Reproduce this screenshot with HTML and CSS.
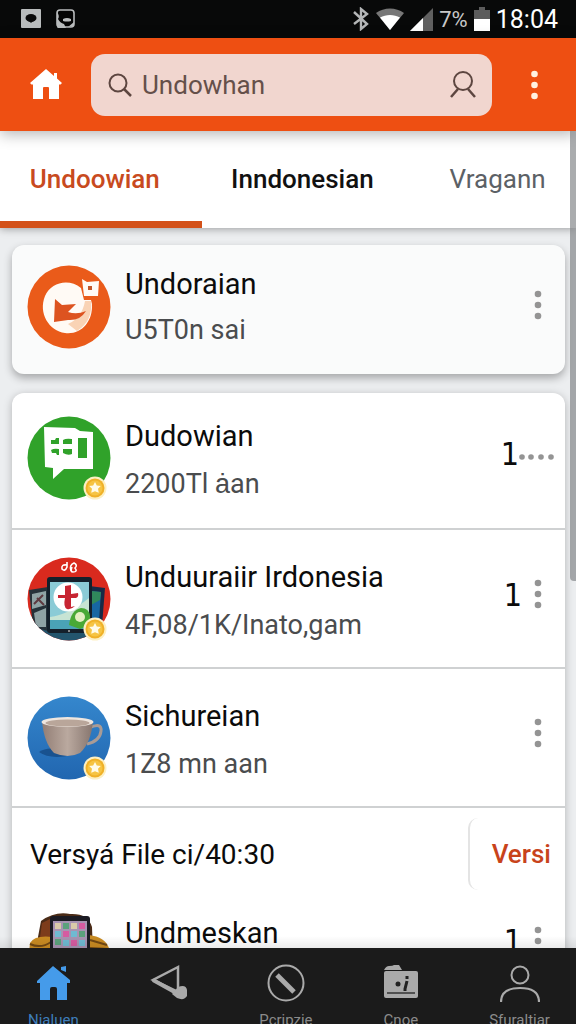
FILE: index.html
```html
<!DOCTYPE html>
<html lang="id">
<head>
  <meta charset="UTF-8">
  <meta name="viewport" content="width=device-width, initial-scale=1.0">
  <title>Undowhan</title>
  <link rel="stylesheet" href="styles.css">
</head>
<body>

  <svg class="defs" width="0" height="0" aria-hidden="true">
    <symbol id="dots" viewBox="0 0 8 30">
      <circle cx="4" cy="4" r="3.3"/><circle cx="4" cy="15" r="3.3"/><circle cx="4" cy="26" r="3.3"/>
    </symbol>
    <symbol id="coin" viewBox="0 0 24 24">
      <circle cx="12" cy="12" r="11.5" fill="#fdf0c4"/>
      <circle cx="12" cy="12" r="9.5" fill="#f0b128"/>
      <circle cx="12" cy="12" r="7.5" fill="#f6c443"/>
      <path d="M12 6l1.8 3.4 4 .6-2.8 2.8.8 4L12 15.200l-3.800 1.600.8-4L6.200 10l4-.6z" fill="#fffbe8"/>
    </symbol>
  </svg>

  <div class="statusbar">
    <div class="status-left">
      <svg width="20" height="20" viewBox="0 0 20 20"><rect width="20" height="19" rx="1" fill="#b9bcbd"/><ellipse cx="10" cy="9" rx="5.500" ry="4" fill="#0a0a0a"/><path d="M8 12h4l-2 2z" fill="#0a0a0a"/></svg>
      <svg width="20" height="20" viewBox="0 0 20 20"><rect x="1" y="1" width="17" height="17" rx="3" fill="#050505" stroke="#b9bcbd" stroke-width="1.600"/><path d="M1 3q3 4 1 7 2 4 6 5l2 4H2q-1 0-1-2z" fill="#b9bcbd"/><path d="M7 10q4-2 8 0v2q-4 1-8 0zM12 18l6-5v4z" fill="#b9bcbd"/></svg>
    </div>
    <div class="status-right">
      <svg width="18" height="24" viewBox="0 0 18 24"><path d="M2 5l13 12-6 5V2l6 5L2 17" fill="none" stroke="#b4b6b7" stroke-width="2.400"/></svg>
      <svg width="28" height="22" viewBox="0 0 28 22"><path d="M0 5C8-1 20-1 28 5L14 22z" fill="#777"/><path d="M4 9.500C10 6 18 6 24 9.500L14 22z" fill="#fff"/></svg>
      <svg width="23" height="23" viewBox="0 0 23 23"><path d="M23 0v23H0z" fill="#606060"/><path d="M13 10v13H0z" fill="#fff"/></svg>
      <span class="battery-text">7%</span>
      <svg width="16" height="24" viewBox="0 0 16 24"><path d="M5 0h6v3h5v21H0V3h5z" fill="#5c5c5c"/><path d="M0 12h16v12H0z" fill="#fff"/></svg>
      <span class="clock">18:04</span>
    </div>
  </div>

  <header class="appbar">
    <a href="#" class="home-link" aria-label="Home">
      <svg width="32" height="31" viewBox="0 0 32 31"><path d="M16 0L0 14l1.500 1.500H3V30h10V19q0-1 1-1h4q1 0 1 1v11h10V15.500h1.500L32 14l-5-4.500V4h-3v3z" fill="#fff"/></svg>
    </a>
    <div class="search">
      <svg width="24" height="24" viewBox="0 0 24 24"><circle cx="10" cy="10" r="8.500" fill="none" stroke="#5d4640" stroke-width="2"/><path d="M16 16l7 7" stroke="#5d4640" stroke-width="2.500"/></svg>
      <input type="text" value="Undowhan" aria-label="Search">
      <svg width="26" height="28" viewBox="0 0 26 28"><circle cx="13" cy="10" r="9" fill="none" stroke="#5d4640" stroke-width="2"/><path d="M8 18L1 26M18 18l7 8" fill="none" stroke="#5d4640" stroke-width="2.500"/></svg>
    </div>
    <button class="menu-btn" aria-label="Menu"><svg width="9" height="30"><use href="#dots"/></svg></button>
  </header>

  <nav class="tabs">
    <a href="#" class="tab active">Undoowian</a>
    <a href="#" class="tab">Inndonesian</a>
    <a href="#" class="tab muted">Vragann</a>
  </nav>

  <main class="content">
    <section class="card featured">
      <div class="row">
        <div class="avatar">
          <svg viewBox="0 0 84 84">
            <circle cx="42" cy="42" r="41.500" fill="#ea5b1a"/>
            <path d="M54 23C42 13 24 17 18 31c-7 17 4 35 20 37 16 2 28-11 27-29l-1-4h-7z" fill="#fffaf5"/>
            <path d="M58 36h6q2 20-14 30l-9-7q14-6 17-23z" fill="#f9d3b5"/>
            <path d="M27 57l1-23 7 6 14-1-8 8q9 3 18-1-6 10-18 9z" fill="#dd5320"/>
            <path d="M55 14l5 3 12-1-1 15H57z" fill="#fffaf5"/>
            <rect x="61" y="21" width="4" height="4" fill="#c4572a"/>
          </svg>
        </div>
        <div class="info">
          <h2>Undoraian</h2>
          <p>U5T0n sai</p>
        </div>
        <button class="more" aria-label="More"><svg width="8" height="30"><use href="#dots"/></svg></button>
      </div>
    </section>

    <section class="card">
      <div class="row first">
        <div class="avatar">
          <svg viewBox="0 0 84 84">
            <circle cx="42" cy="42" r="41.500" fill="#30a22a"/>
            <path d="M17 11l31 1 5 3 13 1v37H37L26 63v-11l-8-1z" fill="#fff"/>
            <g fill="#30a22a"><path d="M24 24h4l1-2h3v6h-8zM36 24q3-2 9-1v5h-9zM24 34q3-2 8-1v6h-2l-1-2h-4zM36 33h9v5q-4 2-9-1zM51 22h9v20h-9z"/></g>
          </svg>
          <svg class="badge"><use href="#coin"/></svg>
        </div>
        <div class="info">
          <h2>Dudowian</h2>
          <p>2200Tl ȧan</p>
        </div>
        <span class="count">1</span>
        <button class="more wide" aria-label="More">
          <svg width="35" height="8" viewBox="0 0 35 8"><circle cx="3" cy="4" r="2.800"/><circle cx="12" cy="4" r="2.800"/><circle cx="22" cy="4" r="2.800"/><circle cx="32" cy="4" r="2.800"/></svg>
        </button>
      </div>

      <div class="row">
        <div class="avatar">
          <svg viewBox="0 0 84 84">
            <clipPath id="round"><circle cx="42" cy="42" r="41.500"/></clipPath>
            <g clip-path="url(#round)">
              <rect width="84" height="84" fill="#d92a1e"/>
              <path d="M0 65h84v19H0z" fill="#23556d"/>
              <path d="M2 33l19-3v44L6 70z" fill="#26323a"/>
              <path d="M5 37l14-3v14L5 52zM7 56l12-5v19H9z" fill="#8fa3a5"/>
              <path d="M10 41l7 7M7 47l9-9" stroke="#5d3940" stroke-width="2"/>
              <path d="M62 29l16 2-3 38-13 4z" fill="#172a46"/>
              <path d="M64 34l10 1-2 29-8 3z" fill="#1766a2"/>
              <path d="M64 34l10 1-1 8-9 5z" fill="#30875b"/>
              <rect x="20" y="20" width="45" height="56" rx="3" fill="#14202b"/>
              <path d="M23 25h39v47H23z" fill="#8bcbd6"/>
              <path d="M23 60q18-2 39-19v31H23z" fill="#c7e4d4"/>
              <path d="M23 63h39v9H23z" fill="#4aa3b6"/>
              <circle cx="41" cy="40" r="14.500" fill="#fff"/>
              <path d="M38 29l6-1v9l7-1q1 4-2 5h-5v9l4-1q-4 4-8 3-4-2-2-11h-7v-3h7z" fill="#c72532"/>
              <path d="M42 68q2-15 12-17 8 0 9 8v9l-10 4z" fill="#49a936"/>
              <circle cx="53" cy="60" r="5" fill="#e4efc2"/>
              <circle cx="42" cy="74" r="1" fill="#aaa"/>
              <path d="M40 8q-6-1-5 4 3 3 5-2V5m4 9q-2-6 3-8 4 2 1 5 3 4-2 4-3 0-1-5" fill="none" stroke="#fff" stroke-width="1.600"/>
            </g>
          </svg>
          <svg class="badge"><use href="#coin"/></svg>
        </div>
        <div class="info">
          <h2>Unduuraiir Irdonesia</h2>
          <p>4F,08/1K/Inato,gam</p>
        </div>
        <span class="count">1</span>
        <button class="more" aria-label="More"><svg width="8" height="30"><use href="#dots"/></svg></button>
      </div>

      <div class="row">
        <div class="avatar">
          <svg viewBox="0 0 84 84">
            <linearGradient id="sky" x2="0" y2="1"><stop stop-color="#3587cd"/><stop offset="1" stop-color="#2166b0"/></linearGradient>
            <linearGradient id="cup"><stop stop-color="#927e75"/><stop offset=".5" stop-color="#baa99f"/><stop offset="1" stop-color="#86756e"/></linearGradient>
            <circle cx="42" cy="42" r="41.500" fill="url(#sky)"/>
            <path d="M12 56q8-6 23-2l10 5q-22 5-33-3z" fill="#19528f"/>
            <path d="M62 32q13-6 12 3-1 10-14 13" fill="none" stroke="#a99b95" stroke-width="3"/>
            <path d="M15 25q2 22 12 32 14 6 26 0 11-10 13-32z" fill="url(#cup)"/>
            <ellipse cx="40.500" cy="26" rx="26" ry="5" fill="#eee6df"/>
            <ellipse cx="40.500" cy="27" rx="22" ry="3.500" fill="#b9a69a"/>
          </svg>
          <svg class="badge"><use href="#coin"/></svg>
        </div>
        <div class="info">
          <h2>Sichureian</h2>
          <p>1Z8 mn aan</p>
        </div>
        <button class="more" aria-label="More"><svg width="8" height="30"><use href="#dots"/></svg></button>
      </div>

      <div class="version">
        <span>Versyá File ci/40:30</span>
        <button class="version-btn">Versi</button>
      </div>

      <div class="row last">
        <div class="avatar">
          <svg viewBox="0 0 84 84">
            <path d="M11 24L14 8Q28-2 43 1q18-1 22 13l1 27H12z" fill="#4a2b17"/>
            <path d="M13 24L15 10l12-6v22z" fill="#7d3c1b"/>
            <path d="M1 50l2-20q5-8 22-6v40zM62 22q16 2 20 13v29H60z" fill="#c98b22"/>
            <path d="M3 31q11 5 21-2M3 37q12 4 21 0M63 27l17 5M63 35l18 1" stroke="#714813" stroke-width="2" fill="none"/>
            <rect x="23" y="3" width="40" height="66" rx="3" fill="#1b1b23"/>
            <rect x="26" y="8" width="34" height="56" fill="#a793b2"/>
            <g fill="#d9caa9"><path d="M28 10h6v6h-6zM44 10h6v6h-6z"/></g>
            <g fill="#5ba17c"><path d="M36 10h6v6h-6zM52 18h6v6h-6zM28 26h6v6h-6z"/></g>
            <g fill="#d65ba1"><path d="M52 10h6v6h-6zM36 18h6v6h-6zM44 27h6v6h-6z"/></g>
            <g fill="#6fbad2"><path d="M28 18h6v6h-6zM44 18h6v6h-6zM36 27h6v6h-6zM52 27h6v6h-6z"/></g>
          </svg>
        </div>
        <div class="info">
          <h2>Undmeskan</h2>
        </div>
        <span class="count">1</span>
        <button class="more" aria-label="More"><svg width="8" height="30"><use href="#dots"/></svg></button>
      </div>
    </section>
    <div class="fade"></div>
  </main>

  <nav class="bottom-nav">
    <a href="#" class="nav-item active">
      <svg width="36" height="38" viewBox="0 0 36 38"><path d="M18 2L2 17v2h3v17h10V25q0-2 2-2h3q2 0 2 2v11h10V19h3v-3z" fill="#459bea"/><path d="M26 3l5-1v6l-5-2z" fill="#459bea"/></svg>
      <span>Nialuen</span>
    </a>
    <a href="#" class="nav-item" aria-label="Back">
      <svg width="40" height="38" viewBox="0 0 40 38"><path d="M29 3L4 16l25 12z" fill="none" stroke="#aaa" stroke-width="2.500"/><path d="M4 16l27 15" stroke="#aaa" stroke-width="4"/><path d="M29 23q8-3 9 3v6q-3 5-10 2l-5-4z" fill="#aaa"/></svg>
    </a>
    <a href="#" class="nav-item">
      <svg width="38" height="38" viewBox="0 0 38 38"><circle cx="19" cy="19" r="17.500" fill="none" stroke="#aaa" stroke-width="2"/><path d="M10 11l17 17" stroke="#aaa" stroke-width="5"/></svg>
      <span>Pcripzie</span>
    </a>
    <a href="#" class="nav-item">
      <svg width="36" height="38" viewBox="0 0 36 38"><path d="M1 6q2-4 5-4 4 0 5-1h5l3 5z" fill="#aaa"/><rect x="1" y="7" width="34" height="27" rx="2" fill="#aaa"/><path d="M4 29h28" stroke="#333" stroke-width="1.500"/><circle cx="15" cy="20" r="2.500" fill="#222"/><path d="M24 17l-2 8v2M24 12v3" stroke="#222" stroke-width="3"/></svg>
      <span>Cnoe</span>
    </a>
    <a href="#" class="nav-item">
      <svg width="40" height="38" viewBox="0 0 40 38"><circle cx="20" cy="11" r="8.500" fill="none" stroke="#aaa" stroke-width="2"/><path d="M1 38q0-14 19-14t19 14" fill="none" stroke="#aaa" stroke-width="2.200"/></svg>
      <span>Sfuraltiar</span>
    </a>
  </nav>

  <div class="scroll-thumb"></div>

</body>
</html>
```

FILE: styles.css
```css
* {
  margin: 0;
  padding: 0;
  box-sizing: border-box;
  font-family: Roboto, "Liberation Sans", sans-serif;
}

body {
  display: flex;
  flex-direction: column;
  height: 100vh;
  overflow: hidden;
  background: #eceef0;
  color: #0b0b0b;
}

svg {
  display: block;
  flex: none;
}

a {
  text-decoration: none;
}

button {
  border: none;
  background: none;
  cursor: pointer;
}

.defs {
  position: absolute;
}

/* status bar */
.statusbar {
  display: flex;
  justify-content: space-between;
  align-items: center;
  flex: none;
  height: 38px;
  padding: 0 18px 0 21px;
  background: #080909;
  color: #fff;
}

.status-left {
  display: flex;
  gap: 15px;
}

.status-right {
  display: flex;
  align-items: center;
  gap: 6px;
}

.battery-text {
  font-size: 22px;
  color: #c8c8c8;
}

.clock {
  font-size: 25px;
}

/* header */
.appbar {
  display: flex;
  align-items: center;
  flex: none;
  height: 93px;
  padding-left: 30px;
  background: #ee4f12;
  position: relative;
  z-index: 2;
  box-shadow: 0 3px 14px rgba(0, 0, 0, 0.3);
}

.search {
  display: flex;
  align-items: center;
  flex: 1;
  min-width: 0;
  height: 62px;
  margin-left: 29px;
  padding: 0 16px 0 17px;
  gap: 10px;
  border-radius: 14px;
  background: #f1d6cf;
}

.search input {
  flex: 1;
  min-width: 0;
  border: none;
  outline: none;
  background: none;
  font-size: 26px;
  color: #65504a;
}

.menu-btn {
  display: flex;
  justify-content: center;
  flex: none;
  width: 84px;
  fill: #fff1e0;
}

/* tabs */
.tabs {
  display: grid;
  grid-template-columns: 35fr 35fr 30fr;
  flex: none;
  height: 97px;
  background: #fff;
  box-shadow: 0 1px 8px rgba(0, 0, 0, 0.35);
  position: relative;
  z-index: 1;
}

.tab {
  display: flex;
  align-items: center;
  justify-content: center;
  padding-top: 6px;
  border-bottom: 7px solid transparent;
  font-size: 26px;
  font-weight: 500;
  color: #111;
}

.tab.active {
  padding-right: 12px;
  color: #c84a20;
  border-color: #d35119;
}

.tab.muted {
  padding-left: 16px;
  font-weight: 400;
  color: #5c6166;
}

/* list */
.content {
  flex: 1;
  min-height: 0;
  overflow: hidden;
  padding: 17px 11px 0 12px;
  position: relative;
}

.card {
  background: #fff;
  border-radius: 12px;
  box-shadow: 0 2px 8px rgba(0, 0, 0, 0.25);
}

.card.featured {
  margin-bottom: 19px;
  background: #fafbfb;
  box-shadow: 0 4px 8px rgba(0, 0, 0, 0.3);
}

.row {
  display: flex;
  align-items: flex-start;
  min-height: 139px;
  padding: 23px 15px 0;
  border-bottom: 2px solid #cfd1d2;
}

.row.first {
  min-height: 137px;
  padding-top: 19px;
}

.featured .row {
  min-height: 129px;
  padding-top: 16px;
  border-bottom: none;
}

.row.last {
  padding-top: 19px;
  border-bottom: none;
}

.avatar {
  position: relative;
  width: 84px;
  height: 84px;
  margin: 4px 14px 0 0;
}

.avatar svg {
  width: 84px;
  height: 84px;
}

.avatar .badge {
  position: absolute;
  right: 4px;
  bottom: 0;
  width: 24px;
  height: 24px;
}

.info {
  flex: 1;
  min-width: 0;
  white-space: nowrap;
}

.info h2 {
  font-size: 29px;
  font-weight: 400;
  line-height: 48px;
}

.info p {
  font-size: 27px;
  line-height: 48px;
  color: #4a4c4e;
}

.featured h2,
.featured p {
  line-height: 46px;
}

.count {
  margin-top: 18px;
  font-family: "DejaVu Sans Condensed", "DejaVu Sans", sans-serif;
  font-size: 32px;
  line-height: 48px;
}

.more {
  display: flex;
  align-items: center;
  justify-content: center;
  width: 24px;
  height: 48px;
  margin-top: 17px;
  margin-left: 4px;
  fill: #949494;
}

.featured .more {
  margin-top: 20px;
}

.more.wide {
  width: 35px;
  margin: 21px -4px 0 0;
}

.last .count,
.last .more {
  margin-top: 8px;
}

.version {
  display: flex;
  justify-content: space-between;
  align-items: center;
  padding: 10px 0 0 18px;
  font-size: 28px;
}

.version-btn {
  height: 72px;
  padding: 0 14px 0 22px;
  border-left: 2px solid #e4e4e4;
  border-radius: 10px;
  font-size: 26px;
  font-weight: 500;
  color: #c8431b;
}

.fade {
  position: absolute;
  left: 0;
  right: 0;
  bottom: 0;
  height: 12px;
  background: linear-gradient(transparent, rgba(0, 0, 0, 0.08));
}

/* bottom navigation */
.bottom-nav {
  display: flex;
  justify-content: space-between;
  flex: none;
  height: 76px;
  padding: 16px 26px 0 28px;
  overflow: hidden;
  background: #1b1b1b;
}

.nav-item {
  display: flex;
  flex-direction: column;
  align-items: center;
  gap: 8px;
  font-size: 15px;
  line-height: 20px;
  color: #8b8b8b;
}

.nav-item.active {
  color: #3f7fbd;
}

.scroll-thumb {
  position: absolute;
  top: 131px;
  right: 0;
  z-index: 3;
  width: 6px;
  height: 450px;
  border-radius: 0 0 0 4px;
  background: rgba(125, 127, 130, 0.65);
}
```
